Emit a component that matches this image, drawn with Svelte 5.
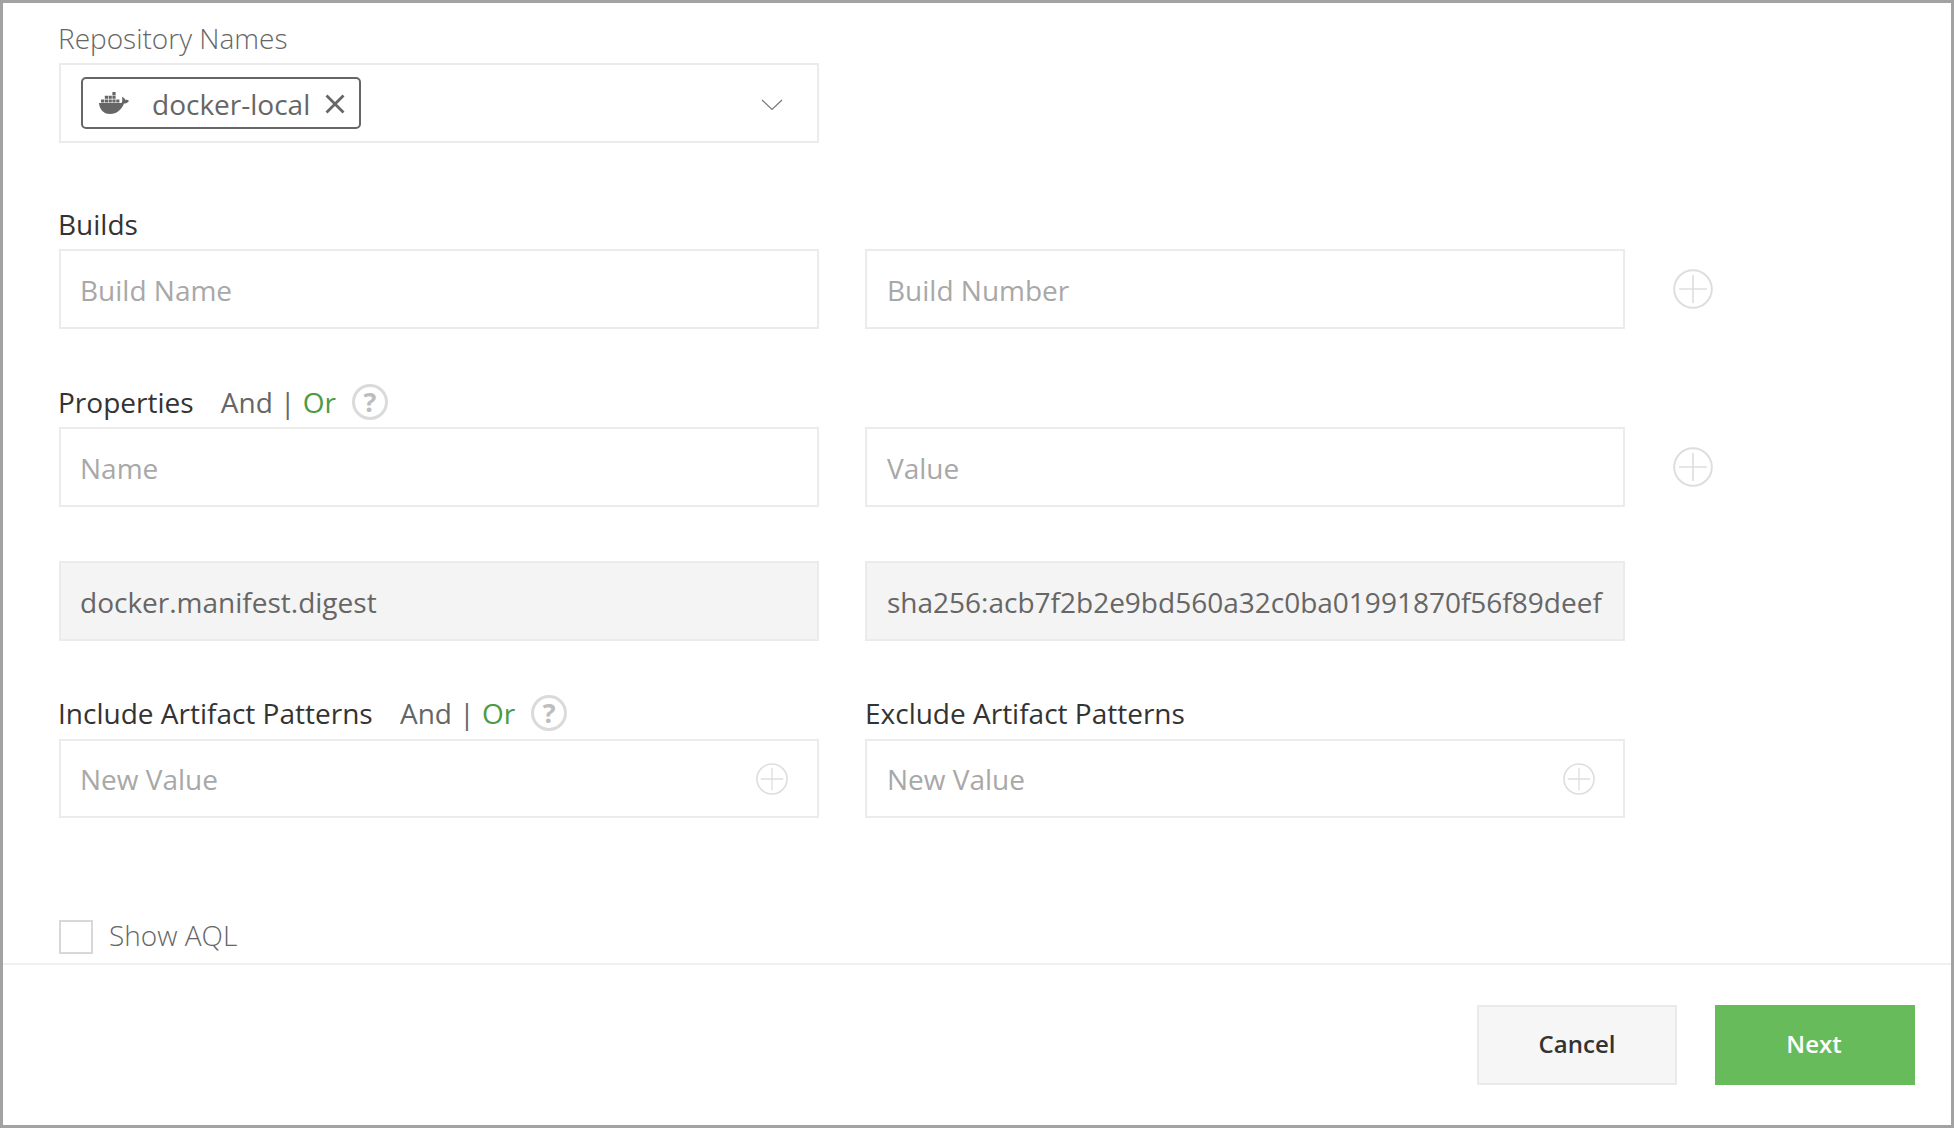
<script lang="ts">
    const placeholderRows = [
        { label: "Builds", left: "Build Name", right: "Build Number" }
    ];
</script>

<div class="frame">
    <div class="form">
        <div class="section repo">
            <div class="label muted">Repository Names</div>
            <div class="row">
                <div class="box select">
                    <span class="chip">
                        <svg class="whale" viewBox="0 0 30 22" width="30" height="22">
                            <path fill="#666" d="M0 11H22.500C23.500 9 23.500 7 23 5C25 5.500 26 7 26.500 8C28 7.500 29 8 30 9C28.500 11 27 11.500 25 11.500C23 17 18 22 11 22C4 22 .5 17 0 11Z"/>
                            <path fill="#666" d="M2 7.400h3.200v3H2zM5.800 7.400h3.200v3H5.800zM9.600 7.400h3.200v3H9.600zM13.400 7.400h3.200v3h-3.200zM17.200 7.400h3.200v3h-3.200zM5.800 3.800h3.200v3H5.800zM9.600 3.800h3.200v3H9.600zM13.400 3.800h3.200v3h-3.200zM13.400 0h3.200v3.200h-3.200z"/>
                        </svg>
                        <span class="chip-name">docker-local</span>
                        <svg class="x" viewBox="0 0 20 20" width="20" height="20">
                            <path d="M1.500 1.500l17 17M18.500 1.500l-17 17" stroke="#666" stroke-width="2.800" fill="none"/>
                        </svg>
                    </span>
                    <svg class="chev" viewBox="0 0 22 12" width="22" height="12">
                        <path d="M1 1l10 9.500L21 1" stroke="#777" stroke-width="1.200" fill="none"/>
                    </svg>
                </div>
            </div>
        </div>

        {#each placeholderRows as r}
            <div class="section builds">
                <div class="label">{r.label}</div>
                <div class="row">
                    <div class="box ph">{r.left}</div>
                    <div class="box ph">{r.right}</div>
                    {@render plus("outer")}
                </div>
            </div>
        {/each}

        <div class="section props">
            <div class="label">
                Properties
                {@render andOr()}
            </div>
            <div class="row">
                <div class="box ph">Name</div>
                <div class="box ph">Value</div>
                {@render plus("outer")}
            </div>
        </div>

        <div class="section digest">
            <div class="row">
                <div class="box filled">docker.manifest.digest</div>
                <div class="box filled">sha256:acb7f2b2e9bd560a32c0ba01991870f56f89deef</div>
            </div>
        </div>

        <div class="section patterns">
            <div class="row">
                <div class="col">
                    <div class="label">
                        Include Artifact Patterns
                        {@render andOr()}
                    </div>
                    <div class="box ph between">New Value {@render plus("inner")}</div>
                </div>
                <div class="col">
                    <div class="label">Exclude Artifact Patterns</div>
                    <div class="box ph between">New Value {@render plus("inner")}</div>
                </div>
            </div>
        </div>

        <label class="show-aql">
            <span class="check"></span>
            <span class="aql-text">Show AQL</span>
        </label>
    </div>

    <div class="footer">
        <button class="btn cancel">Cancel</button>
        <button class="btn next">Next</button>
    </div>
</div>

{#snippet plus(kind)}
    <svg class="plus {kind}" viewBox="0 0 40 40">
        <circle cx="20" cy="20" r="18.800" fill="none" stroke="#dedede" stroke-width="2"/>
        <path d="M20 6v28M6 20h28" stroke="#dedede" stroke-width="1.600"/>
    </svg>
{/snippet}

{#snippet andOr()}
    <span class="andor">And | <span class="or">Or</span></span>
    <span class="help">?</span>
{/snippet}

<style>
    :global(body) {
        margin: 0;
        background: #fff;
    }

    .frame {
        box-sizing: border-box;
        width: 1954px;
        height: 1128px;
        border: 3px solid #a2a2a2;
        display: flex;
        flex-direction: column;
        font-family: "Open Sans", sans-serif;
        font-size: 28px;
        color: #333;
        overflow: hidden;
    }

    .form {
        padding: 18px 0 0 56px;
        height: 962px;
        box-sizing: border-box;
        border-bottom: 2px solid #f0f0f0;
    }

    .label {
        height: 42px;
        padding-bottom: 8px;
        margin-left: -1px;
        box-sizing: border-box;
        display: flex;
        align-items: center;
        line-height: 34px;
        font-weight: 400;
        color: #333;
        white-space: pre;
    }

    .muted {
        color: #666;
        font-weight: 300;
    }

    .row {
        display: flex;
        gap: 46px;
        align-items: center;
    }

    .col {
        display: flex;
        flex-direction: column;
    }

    .col .label {
        padding-bottom: 10px;
    }

    .col + .col .label {
        margin-left: 0;
    }

    .box {
        box-sizing: border-box;
        width: 760px;
        height: 80px;
        border: 2px solid #ebebeb;
        padding: 1px 20px 0;
        display: flex;
        align-items: center;
        flex-shrink: 0;
    }

    .row > .box:first-child,
    .col:first-child .box {
        padding-left: 19px;
    }

    .ph {
        color: #a8a8a8;
    }

    .filled {
        background: #f4f4f4;
        color: #666;
    }

    .between {
        height: 79px;
        padding-top: 0;
        justify-content: space-between;
        padding-right: 29px;
    }

    .col + .col .between {
        padding-right: 28px;
    }

    .row > .box.select:first-child {
        justify-content: space-between;
        padding: 0 34px 0 20px;
    }

    .chip {
        box-sizing: border-box;
        display: flex;
        align-items: center;
        height: 52px;
        width: 280px;
        border: 2px solid #666;
        border-radius: 5px;
        padding: 2px 0 0 16px;
        color: #666;
    }

    .whale {
        margin-top: -3px;
    }

    .chip-name {
        margin-left: 23px;
        margin-right: 15px;
    }

    .chev {
        margin-top: 4px;
    }

    .section.builds {
        margin-top: 64px;
    }

    .section.props {
        margin-top: 56px;
    }

    .section.digest {
        margin-top: 54px;
    }

    .section.patterns {
        margin-top: 56px;
    }

    .andor {
        margin-left: 20px;
        color: #666;
    }

    .or {
        color: #4d9a45;
    }

    .help {
        margin-left: 16px;
        margin-top: -1px;
        width: 36px;
        height: 36px;
        flex-shrink: 0;
        border-radius: 50%;
        box-shadow: inset 0 0 0 3px #dadada;
        display: flex;
        align-items: center;
        justify-content: center;
        font-size: 27px;
        font-weight: 700;
        line-height: 36px;
        color: #bdbdbd;
    }

    .plus.outer {
        width: 40px;
        height: 40px;
        margin-left: 2px;
    }

    .plus.inner {
        width: 32px;
        height: 32px;
    }

    .show-aql {
        display: flex;
        align-items: center;
        gap: 16px;
        margin-top: 101px;
        color: #666;
        font-weight: 300;
    }

    .aql-text {
        margin-top: -3px;
    }

    .check {
        box-sizing: border-box;
        width: 34px;
        height: 34px;
        border: 2px solid #d8d8d8;
    }

    .footer {
        display: flex;
        justify-content: flex-end;
        gap: 38px;
        padding: 40px 36px 0 0;
    }

    .btn {
        box-sizing: border-box;
        width: 200px;
        height: 80px;
        padding: 0 0 3px;
        font-family: inherit;
        font-size: 24px;
        font-weight: 600;
    }

    .cancel {
        background: #f6f6f6;
        border: 2px solid #eaeaea;
        color: #333;
    }

    .next {
        background: #67bb5a;
        border: none;
        color: #fff;
        padding-right: 2px;
    }
</style>
